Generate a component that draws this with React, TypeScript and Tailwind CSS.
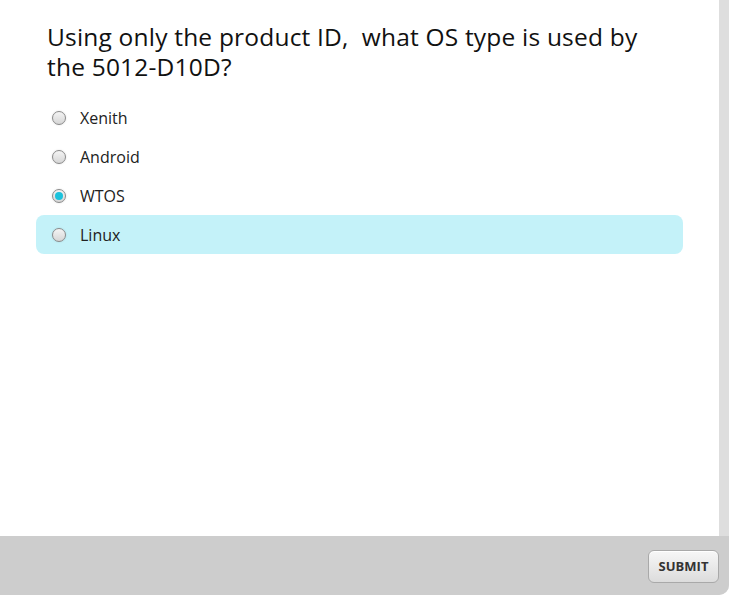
import { useState } from 'react'

const options = ['Xenith', 'Android', 'WTOS', 'Linux']

function Radio({ checked }: { checked: boolean }) {
  return (
    <span className="flex h-[14px] w-[14px] items-center justify-center rounded-full border border-[#8a8a8a] bg-gradient-to-b from-[#f4f4f4] to-[#d6d6d6] shadow-[0_0_2px_rgba(0,0,0,0.15)]">
      {checked && <span className="h-[8px] w-[8px] rounded-full bg-[#1cc2dc]" />}
    </span>
  )
}

export default function App() {
  const [selected] = useState('WTOS')
  const hovered = 'Linux'

  return (
    <div className="h-[595px] w-[735px] bg-white" style={{ fontFamily: '"Open Sans", "Noto Sans", sans-serif' }}>
      <div className="flex h-[595px] w-[729px] flex-col overflow-hidden rounded-br-[10px] bg-[#dedede]">
        <div className="mr-[10px] h-[536px] bg-white px-[36px] pt-[22px]">
          <h1 className="pl-[11px] text-[24.5px] leading-[30px] tracking-[0.2px] text-[#111]">
            Using only the product ID,&nbsp; what OS type is used by
            <br />
            the 5012-D10D?
          </h1>
          <div className="mt-[16px] flex flex-col">
            {options.map((o) => (
              <div
                key={o}
                className={
                  'flex h-[39px] items-center gap-[14px] rounded-[8px] pl-[16px] ' +
                  (o === hovered ? 'bg-[#c4f2f9]' : '')
                }
              >
                <Radio checked={o === selected} />
                <span className="text-[16px] text-[#222]">{o}</span>
              </div>
            ))}
          </div>
        </div>
        <div className="flex flex-1 items-center justify-end bg-[#cdcdcd] pr-[10px]">
          <button className="mt-[2px] h-[33px] w-[71px] rounded-[6px] border border-[#a9a9a9] bg-gradient-to-b from-[#f7f7f7] to-[#dcdcdc] text-[13px] font-bold text-[#333] shadow-[inset_0_1px_0_#fff]">
            SUBMIT
          </button>
        </div>
      </div>
    </div>
  )
}
